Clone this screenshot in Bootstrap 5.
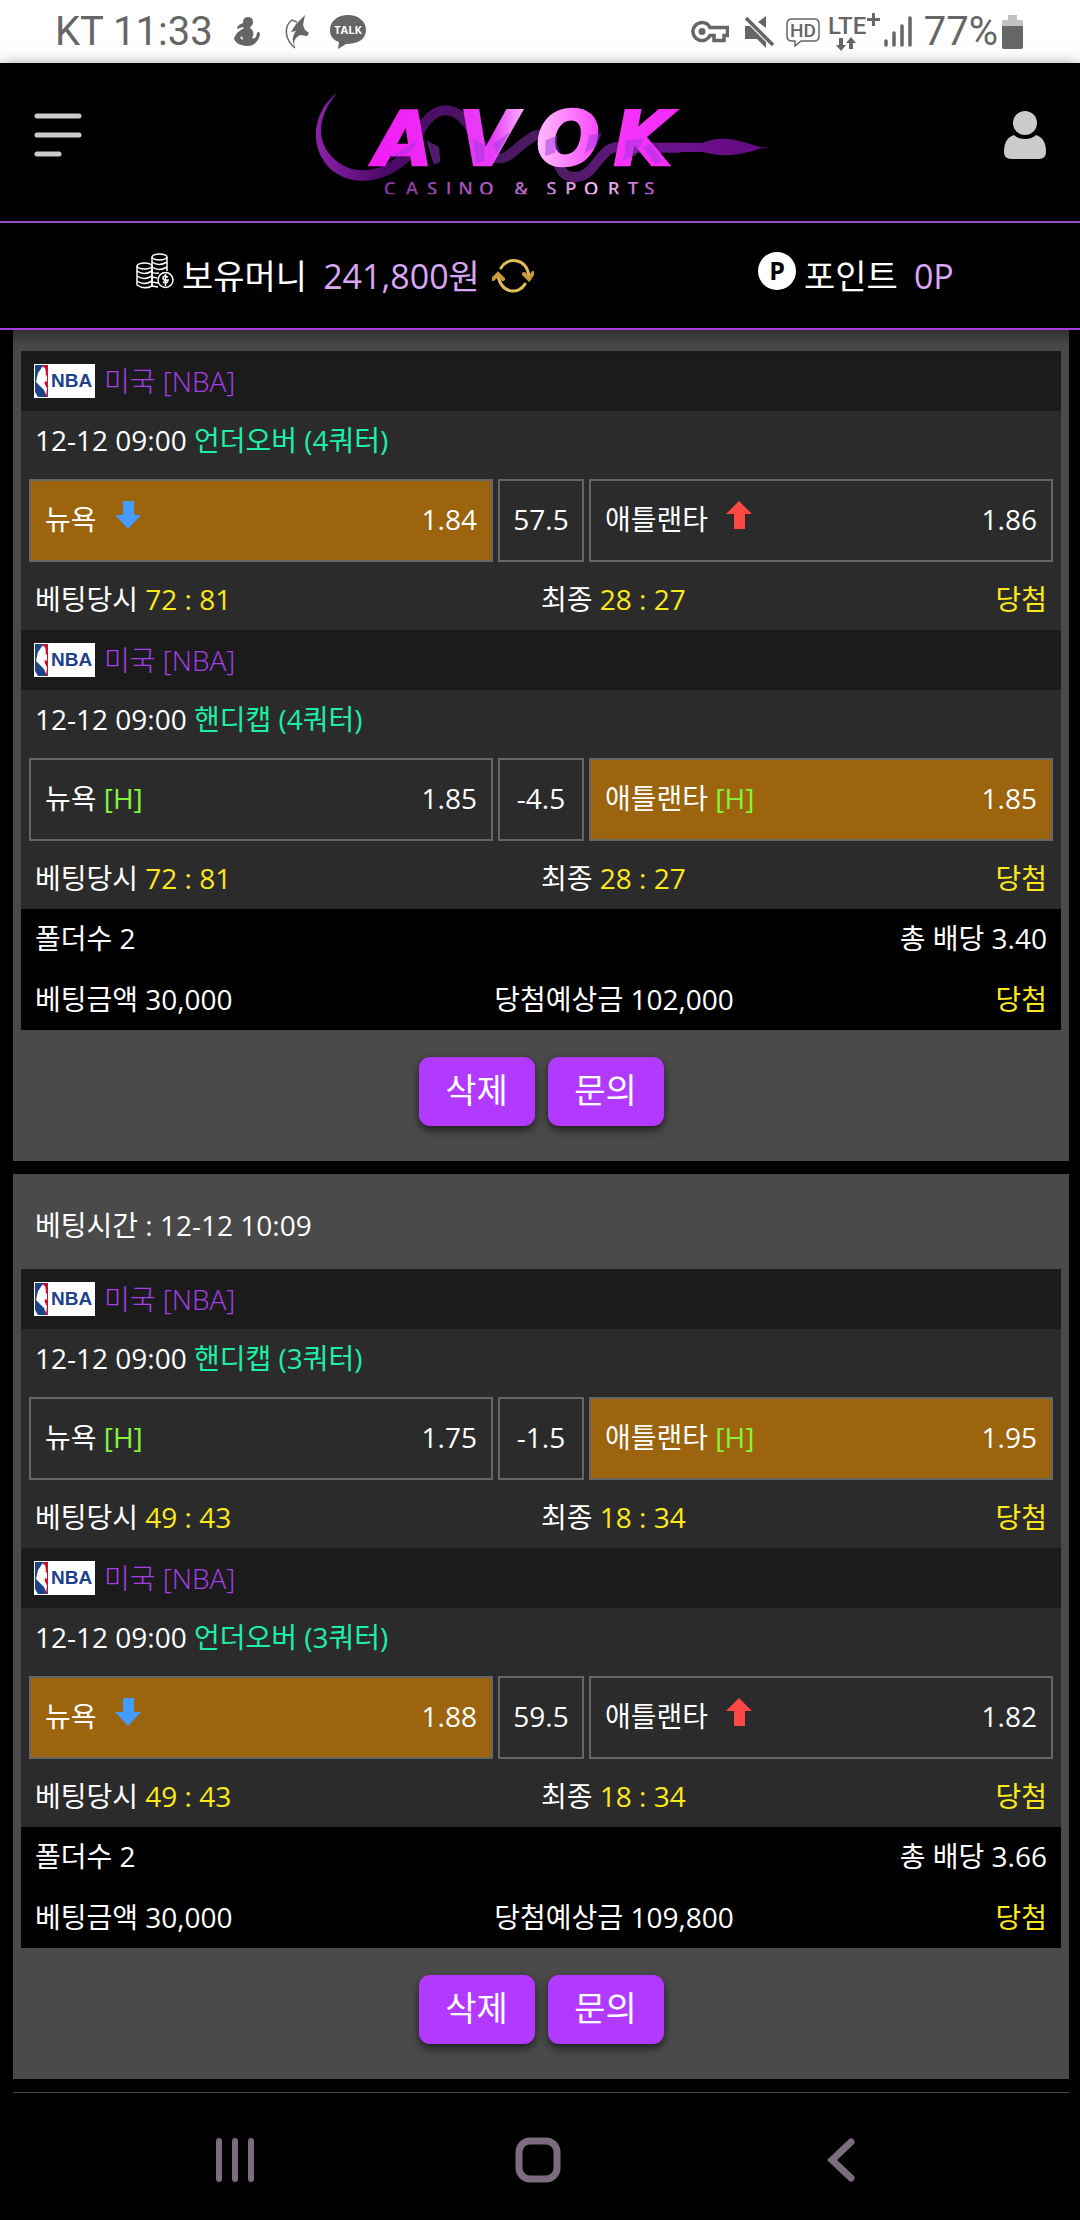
<!DOCTYPE html>
<html lang="ko">
<head>
<meta charset="utf-8">
<meta name="viewport" content="width=device-width, initial-scale=1">
<title>AVOK</title>
<link href="https://cdn.jsdelivr.net/npm/bootstrap@5.3.0/dist/css/bootstrap.min.css" rel="stylesheet">
<style>
  body { background: #000; color: #fff; font-family: "Open Sans", "Noto Sans CJK KR", sans-serif; font-size: 28px; font-weight: 400; line-height: 58px; }
  svg { display: block; flex: none; }
  .status-bar { background: #fff; color: #666; height: 63px; padding: 0 57px 0 55px; font-family: Roboto, sans-serif; font-size: 40px; line-height: 60px; }
  .status-bar svg { fill: #666; }
  .status-left { gap: 21px; }
  .site-top { z-index: 2; background: #000; box-shadow: 0 4px 16px rgba(0,0,0,.55); border-bottom: 2px solid #a63fdd; }
  .brand-bar { height: 160px; padding: 0 34px; border-bottom: 2px solid #9b4cc4; }
  .brand-bar .plain-btn { margin-bottom: 14px; }
  .plain-btn { background: none; border: 0; padding: 0; }
  .money-bar { height: 105px; padding-right: 38px; font-size: 34px; }
  .money-own { flex: 9; }
  .money-point { flex: 5; }
  .money-bar .amount { color: #d9a6f5; }
  .raised { margin-bottom: 10px; }
  .feed { padding: 0 11px 0 13px; }
  .slip { background: #4a4a4a; padding: 0 8px 35px; margin-bottom: 13px; }
  .slip-first { padding-top: 21px; }
  .slip-time { padding: 22px 14px 15px; }
  .league { background: #1b1b1b; color: #a93fe8; font-weight: 300; height: 60px; padding: 0 13px 1px; gap: 9px; }
  .nba-logo { width: 61px; height: 34px; background: #fff; color: #1d428a; font-family: "Liberation Sans", sans-serif; font-size: 19px; font-weight: 700; line-height: 34px; }
  .game { background: #2b2b2b; }
  .line { padding: 0 14px; height: 60px; }
  .market { color: #1eefa8; }
  .yel { color: #fbe91d; }
  .hcap { color: #83f63b; }
  .picks { padding: 8px; gap: 5px; }
  .pick { flex: 1 1 0; height: 83px; border: 2px solid #666; padding: 0 14px 4px; }
  .pick-mid { flex: 0 0 86px; padding: 0 0 4px; }
  .pick-on { background: #9b640d; }
  .arrow { margin: 0 0 8px 18px; }
  .totals { background: #000; gap: 1px; }
  .actions { padding-top: 27px; gap: 13px; }
  .btn-slip { --bs-btn-bg: #b239ff; --bs-btn-color: #fff; --bs-btn-hover-bg: #a02bea; --bs-btn-hover-color: #fff; width: 116px; height: 69px; border: 0; border-radius: 11px; padding: 0 0 3px; font-size: 34px; line-height: 60px; box-shadow: 0 4px 8px rgba(0,0,0,.6); }
  .feed-end { border-top: 1px solid #4a4a4a; }
  .sys-nav { padding: 44px 88px 0 84px; }
</style>
<script src="https://cdn.jsdelivr.net/npm/bootstrap@5.3.0/dist/js/bootstrap.bundle.min.js"></script>
</head>
<body>

<svg width="0" height="0" class="position-absolute" aria-hidden="true">
  <symbol id="nba" viewBox="0 0 17 34">
    <path d="M1 1h9L4 9 2 18l8 8 3 7H4L1 28z" fill="#1d428a"/>
    <path d="M9 1h5v32h-2l1-9-3-4 1-3 2 1V12l-3-3z" fill="#c8102e"/>
    <path d="M8 3l3 1 1 5-3 6 3 8-2 2-7-7 2-9z" fill="#fff"/>
  </symbol>
  <symbol id="down" viewBox="0 0 26 28"><path d="M8 0h11v14h7L13 28 0 14h8z" fill="#459cff"/></symbol>
  <symbol id="up" viewBox="0 0 26 28"><path d="M8 28h11V13h7L13 0 0 13h8z" fill="#ff4743"/></symbol>
</svg>

<div class="status-bar d-flex align-items-center justify-content-between">
  <div class="status-left d-flex align-items-center">
    <span>KT 11:33</span>
    <svg width="26" height="30" viewBox="0 0 26 30"><path d="M14 0c4 0 5 3 5 5s-1 4-3 5l1 2c3 2 3 5 1 9 2 1 3 0 4-1l1-4c1-2 3-1 3 1-1 6-5 12-13 12C8 29 0 26 0 21l3-5c2-2 5-4 7-5l-1-1-6 2c0-3 3-5 6-6 0-3 1-6 5-6zM8 19l-2 2 3 2z"/></svg>
    <svg class="ms-1" width="24" height="34" viewBox="0 0 24 34"><path d="M20 0l-2 10 2 5 4 3-2 3-7-1c-5 3-7 6-5 12-4-7-2-12 1-16l-5 1 5-8z"/><path d="M12 7L7 5C-1 11-1 24 10 33" fill="none" stroke="#666" stroke-width="1.500"/></svg>
    <svg width="36" height="34" viewBox="0 0 36 34"><path d="M18 0c10 0 18 6 18 15S28 29 16 29l-8 5 1-7C3 25 0 21 0 15 0 6 8 0 18 0z"/><text x="18" y="19" text-anchor="middle" font-family="Open Sans" font-weight="700" font-size="11" style="fill:#fff">TALK</text></svg>
  </div>
  <div class="d-flex align-items-center">
    <svg class="me-3" width="38" height="23" viewBox="0 0 38 23"><path d="M11 2.500a9 9 0 1 0 8 13h4v5h10v-5h3.500v-8H19a9 9 0 0 0-8-5z" style="fill:none;stroke:#666;stroke-width:3.500"/><circle cx="11" cy="11.500" r="3.500"/></svg>
    <svg class="me-2" width="29" height="32" viewBox="0 0 29 32"><path d="M0 10h5l16 16v6l-9-9H0zM21 0v12l-8-6z"/><path d="M1 2l27 27" stroke="#666" stroke-width="3.500"/></svg>
    <svg class="mx-1" width="34" height="30" viewBox="0 0 34 30"><path d="M6 2h22q5 0 5 5v12q0 5-5 5H15l-6 5v-5H6q-5 0-5-5V7q0-5 5-5z" style="fill:none;stroke:#666;stroke-width:1.500"/><text x="17" y="20" text-anchor="middle" font-family="Roboto" font-weight="500" font-size="19">HD</text></svg>
    <svg class="mx-1" width="52" height="38" viewBox="0 0 52 38"><text x="0" y="21" font-family="Roboto" font-weight="500" font-size="24">LTE</text><path d="M44 0h3v5h5v3h-5v5h-3V8h-5V5h5z"/><path d="M11 25h4v7h3l-5 6-5-6h3zM21 36h4v-6h3l-5-6-5 6h3z"/></svg>
    <svg class="me-2" width="28" height="31" viewBox="0 0 28 31"><path d="M2 25v4M10 17v12M18 10v19M26 2v27" stroke="#666" stroke-width="3.500" stroke-linecap="round"/></svg>
    <span class="mx-1">77%</span>
    <svg width="21" height="34" viewBox="0 0 21 34"><path d="M6 0h9v5h4q2 0 2 2v5H0V7q0-2 2-2h4z" style="fill:#c2c2c2"/><path d="M0 11h21v21q0 2-2 2H2q-2 0-2-2z"/></svg>
  </div>
</div>

<header class="site-top position-relative">
  <div class="brand-bar d-flex align-items-center justify-content-between">
    <button class="plain-btn" type="button" aria-label="메뉴">
      <svg width="48" height="48" viewBox="0 0 48 48"><path d="M3 5h42M3 24h42M3 43h22" stroke="#cbcbc9" stroke-width="5" stroke-linecap="round"/></svg>
    </button>
    <a href="#" class="text-decoration-none" aria-label="AVOK CASINO &amp; SPORTS">
      <svg width="500" height="140" viewBox="0 0 1500 420">
        <defs>
          <linearGradient id="mag" x1="245" y1="0" x2="1175" y2="0" gradientUnits="userSpaceOnUse">
            <stop offset="0" stop-color="#f21cf5"/><stop offset=".38" stop-color="#e83df8"/><stop offset=".5" stop-color="#ffc8ff"/><stop offset=".58" stop-color="#ff9cff"/><stop offset=".75" stop-color="#f636fa"/><stop offset="1" stop-color="#f52af8"/>
          </linearGradient>
          <linearGradient id="sub" x1="270" y1="0" x2="1090" y2="0" gradientUnits="userSpaceOnUse">
            <stop offset="0" stop-color="#8c32a4"/><stop offset=".5" stop-color="#b565ca"/><stop offset=".8" stop-color="#f3c0f6"/><stop offset="1" stop-color="#b04fc8"/>
          </linearGradient>
          <linearGradient id="tail" x1="70" y1="0" x2="1430" y2="0" gradientUnits="userSpaceOnUse">
            <stop offset="0" stop-color="#8b22a8"/><stop offset=".15" stop-color="#4b0968"/><stop offset=".5" stop-color="#4c1c60"/><stop offset=".8" stop-color="#6b128c"/><stop offset="1" stop-color="#64077f"/>
          </linearGradient>
          <clipPath id="cut"><rect x="0" y="0" width="1500" height="367"/></clipPath>
        </defs>
        <path d="M132 62C80 125 70 190 105 240c55 75 160 75 230-10l25 25c-85 95-225 95-275 0C50 185 75 105 132 62z" fill="url(#tail)"/>
        <path d="M360 230C400 100 470 90 520 150S590 300 660 240s80-65 110-30 15 110 80 105 70-110 150-88h160" fill="none" stroke="url(#tail)" stroke-width="30"/>
        <path d="M1100 212h130c50-20 90-15 175 14l30 1-30 2c-75 25-125 25-175 11h-130z" fill="url(#tail)"/>
        <text x="245 498 730 962" y="280" font-family="DejaVu Sans, sans-serif" font-weight="700" font-style="italic" font-size="224" fill="url(#mag)" stroke="url(#mag)" stroke-width="8">AVOK</text>
        <path d="M285 262l95-62-30 40zM400 205l38 20 4 45-20 8zM540 200l34 20v46l-24 8zM600 215l50-34-40 68z" fill="#9b35dc" opacity=".5"/>
        <path d="M758 205l36-15-8 52-30 10zM890 190l36-8-16 42-36 20zM1000 205l50-5-20 48-40 20zM1070 215l38 50-22 10-36-50z" fill="#9b35dc" opacity=".5"/>
        <g clip-path="url(#cut)">
          <text x="272 338 402 458 496 558 620 664 720 760 816 872 944 1004 1054" y="370" font-family="Open Sans, sans-serif" font-weight="600" font-size="56" fill="url(#sub)">CASINO &amp; SPORTS</text>
        </g>
      </svg>
    </a>
    <button class="plain-btn" type="button" aria-label="내 정보">
      <svg width="42" height="48" viewBox="0 0 42 48"><circle cx="21" cy="12" r="12" fill="#cbcbc9"/><path d="M10 24q4 4 11 4t11-4q10 3 10 17 0 7-7 7H7q-7 0-7-7 0-14 10-17z" fill="#cbcbc9"/></svg>
    </button>
  </div>
  <div class="money-bar d-flex align-items-center">
    <div class="money-own d-flex align-items-center justify-content-center">
      <svg class="raised me-2" width="38" height="36" viewBox="0 0 38 36" fill="none" stroke="#fff" stroke-width="1.500">
        <ellipse cx="8.500" cy="13" rx="7.500" ry="3"/><path d="M1 13v19q7 5 15 1M16 13v20M1 18q7 5 15 0M1 23q7 5 15 0M1 28q7 5 15 0"/>
        <ellipse cx="23.500" cy="4" rx="7.500" ry="3"/><path d="M16 4v29l6 1M31 4v14M16 9q7 5 15 0M16 14q7 5 15 0M16 19q3 2 7 1M16 24l5 1M16 29l6 1"/>
        <circle cx="29.500" cy="27" r="7.500"/><path d="M32 24q-5-2-5 1t5 2q0 4-5 2M29.500 21v12"/></svg>
      <span>보유머니</span><span class="amount ms-3">241,800원</span>
      <button class="plain-btn ms-2" type="button" aria-label="새로고침">
        <svg class="ms-1" width="42" height="36" viewBox="0 0 42 36" fill="none" stroke="#dfbd55" stroke-width="3" stroke-linecap="round"><path d="M9 10C15-1 34-1 37 18M33 26C27 37 9 36 6 17"/><path d="M32 16l5 5 4-6M1 21l5-5 5 5" stroke="#c89b3a" stroke-width="4"/></svg>
      </button>
    </div>
    <div class="money-point d-flex align-items-center justify-content-center">
      <svg class="raised me-2" width="38" height="38" viewBox="0 0 38 38"><circle cx="19" cy="19" r="19" fill="#fff"/><text x="19" y="28" text-anchor="middle" font-family="Open Sans" font-weight="700" font-size="25" fill="#000">P</text></svg>
      <span>포인트</span><span class="amount ms-3">0P</span>
    </div>
  </div>
</header>

<main class="feed">
  <section class="slip slip-first">
    <article class="game">
      <div class="league d-flex align-items-center"><span class="nba-logo d-flex"><svg width="17" height="34"><use href="#nba"/></svg>NBA</span><span>미국 [NBA]</span></div>
      <div class="line">12-12 09:00 <span class="market">언더오버 (4쿼터)</span></div>
      <div class="picks d-flex">
        <div class="pick pick-on d-flex align-items-center"><span>뉴욕</span><svg class="arrow" width="26" height="28"><use href="#down"/></svg><span class="ms-auto">1.84</span></div>
        <div class="pick pick-mid d-flex align-items-center justify-content-center">57.5</div>
        <div class="pick d-flex align-items-center"><span>애틀랜타</span><svg class="arrow" width="26" height="28"><use href="#up"/></svg><span class="ms-auto">1.86</span></div>
      </div>
      <div class="line d-flex justify-content-between"><span>베팅당시 <span class="yel">72 : 81</span></span><span>최종 <span class="yel">28 : 27</span></span><span class="yel">당첨</span></div>
    </article>
    <article class="game">
      <div class="league d-flex align-items-center"><span class="nba-logo d-flex"><svg width="17" height="34"><use href="#nba"/></svg>NBA</span><span>미국 [NBA]</span></div>
      <div class="line">12-12 09:00 <span class="market">핸디캡 (4쿼터)</span></div>
      <div class="picks d-flex">
        <div class="pick d-flex align-items-center"><span>뉴욕 <span class="hcap">[H]</span></span><span class="ms-auto">1.85</span></div>
        <div class="pick pick-mid d-flex align-items-center justify-content-center">-4.5</div>
        <div class="pick pick-on d-flex align-items-center"><span>애틀랜타 <span class="hcap">[H]</span></span><span class="ms-auto">1.85</span></div>
      </div>
      <div class="line d-flex justify-content-between"><span>베팅당시 <span class="yel">72 : 81</span></span><span>최종 <span class="yel">28 : 27</span></span><span class="yel">당첨</span></div>
    </article>
    <div class="totals d-flex flex-column">
      <div class="line d-flex justify-content-between"><span>폴더수 2</span><span>총 배당 3.40</span></div>
      <div class="line d-flex justify-content-between"><span>베팅금액 30,000</span><span>당첨예상금 102,000</span><span class="yel">당첨</span></div>
    </div>
    <div class="actions d-flex justify-content-center">
      <button class="btn btn-slip" type="button">삭제</button>
      <button class="btn btn-slip" type="button">문의</button>
    </div>
  </section>

  <section class="slip">
    <div class="slip-time">베팅시간 : 12-12 10:09</div>
    <article class="game">
      <div class="league d-flex align-items-center"><span class="nba-logo d-flex"><svg width="17" height="34"><use href="#nba"/></svg>NBA</span><span>미국 [NBA]</span></div>
      <div class="line">12-12 09:00 <span class="market">핸디캡 (3쿼터)</span></div>
      <div class="picks d-flex">
        <div class="pick d-flex align-items-center"><span>뉴욕 <span class="hcap">[H]</span></span><span class="ms-auto">1.75</span></div>
        <div class="pick pick-mid d-flex align-items-center justify-content-center">-1.5</div>
        <div class="pick pick-on d-flex align-items-center"><span>애틀랜타 <span class="hcap">[H]</span></span><span class="ms-auto">1.95</span></div>
      </div>
      <div class="line d-flex justify-content-between"><span>베팅당시 <span class="yel">49 : 43</span></span><span>최종 <span class="yel">18 : 34</span></span><span class="yel">당첨</span></div>
    </article>
    <article class="game">
      <div class="league d-flex align-items-center"><span class="nba-logo d-flex"><svg width="17" height="34"><use href="#nba"/></svg>NBA</span><span>미국 [NBA]</span></div>
      <div class="line">12-12 09:00 <span class="market">언더오버 (3쿼터)</span></div>
      <div class="picks d-flex">
        <div class="pick pick-on d-flex align-items-center"><span>뉴욕</span><svg class="arrow" width="26" height="28"><use href="#down"/></svg><span class="ms-auto">1.88</span></div>
        <div class="pick pick-mid d-flex align-items-center justify-content-center">59.5</div>
        <div class="pick d-flex align-items-center"><span>애틀랜타</span><svg class="arrow" width="26" height="28"><use href="#up"/></svg><span class="ms-auto">1.82</span></div>
      </div>
      <div class="line d-flex justify-content-between"><span>베팅당시 <span class="yel">49 : 43</span></span><span>최종 <span class="yel">18 : 34</span></span><span class="yel">당첨</span></div>
    </article>
    <div class="totals d-flex flex-column">
      <div class="line d-flex justify-content-between"><span>폴더수 2</span><span>총 배당 3.66</span></div>
      <div class="line d-flex justify-content-between"><span>베팅금액 30,000</span><span>당첨예상금 109,800</span><span class="yel">당첨</span></div>
    </div>
    <div class="actions d-flex justify-content-center">
      <button class="btn btn-slip" type="button">삭제</button>
      <button class="btn btn-slip" type="button">문의</button>
    </div>
  </section>
  <div class="feed-end"></div>
</main>

<nav class="sys-nav d-flex" aria-label="시스템">
  <button class="plain-btn col d-flex justify-content-center" type="button" aria-label="최근 앱"><svg width="40" height="46" viewBox="0 0 40 46"><path d="M4 4v38M20 4v38M36 4v38" stroke="#7d6b80" stroke-width="6" stroke-linecap="round"/></svg></button>
  <button class="plain-btn col d-flex justify-content-center" type="button" aria-label="홈"><svg width="46" height="46" viewBox="0 0 46 46"><rect x="4" y="4" width="38" height="38" rx="11" fill="none" stroke="#7d6b80" stroke-width="7"/></svg></button>
  <button class="plain-btn col d-flex justify-content-center" type="button" aria-label="뒤로"><svg width="28" height="46" viewBox="0 0 28 46"><path d="M24 5L5 23l19 18" fill="none" stroke="#7d6b80" stroke-width="7" stroke-linecap="round"/></svg></button>
</nav>
</body>
</html>
